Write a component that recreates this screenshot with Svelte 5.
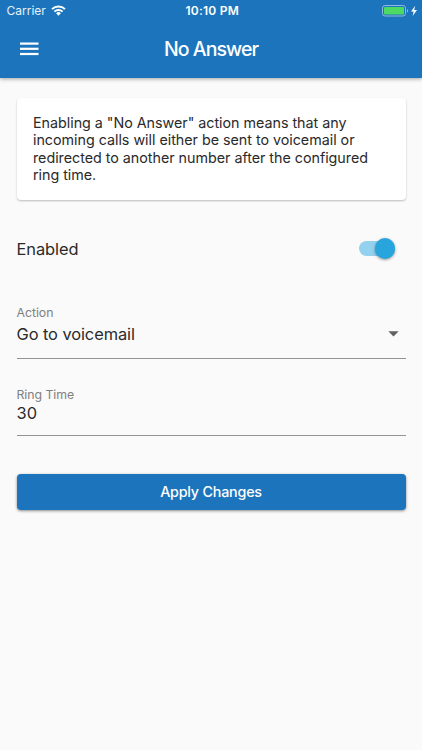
<script>
	let enabled = true;
	let action = "Go to voicemail";
	let ringTime = "30";
</script>

<div class="screen">
	<header>
		<div class="statusbar">
			<div class="carrier">
				<span>Carrier</span>
				<svg width="15" height="11" viewBox="0 0 15 11" fill="none" stroke="#fff">
					<path d="M1 4.1a9.3 9.3 0 0 1 13 0" stroke-width="2" />
					<path d="M3.4 6.7a5.8 5.8 0 0 1 8.2 0" stroke-width="1.9" />
					<path d="M5.1 8.3a3.4 3.4 0 0 1 4.8 0L7.5 10.7z" fill="#fff" stroke="none" />
				</svg>
			</div>
			<span class="time">10:10 PM</span>
			<div class="power">
				<svg width="36" height="12" viewBox="0 0 36 12">
					<rect x=".5" y=".5" width="23" height="10.5" rx="2.6" fill="none" stroke="#8fbbe0" />
					<rect x="2" y="2" width="20" height="7.5" rx="1.2" fill="#4cd964" />
					<path d="M25 4c1.5.5 1.5 3.1 0 3.6z" fill="#8fbbe0" />
					<path d="M33.2.8 29 6.5h2.6l-1 4.4 4.4-6h-2.8z" fill="#fff" />
				</svg>
			</div>
		</div>
		<div class="toolbar">
			<button class="menu" aria-label="Menu">
				<svg width="19" height="14" viewBox="0 0 19 14" fill="#fff">
					<rect y=".5" width="18.5" height="2.2" />
					<rect y="5.7" width="18.5" height="2.2" />
					<rect y="10.9" width="18.5" height="2.2" />
				</svg>
			</button>
			<h1>No Answer</h1>
		</div>
	</header>

	<main>
		<p class="card">
			Enabling a "No Answer" action means that any<br />
			incoming calls will either be sent to voicemail or<br />
			redirected to another number after the configured<br />
			ring time.
		</p>

		<div class="switch-row">
			<span>Enabled</span>
			<button
				class="switch"
				class:on={enabled}
				role="switch"
				aria-checked={enabled}
				aria-label="Enabled"
				on:click={() => (enabled = !enabled)}
			>
				<span class="thumb"></span>
			</button>
		</div>

		<div class="field action">
			<span class="label">Action</span>
			<div class="value">
				<span>{action}</span>
				<svg width="11" height="6" viewBox="0 0 11 6"><path d="M.3.3h10.4L5.5 5.5z" fill="#616161" /></svg>
			</div>
		</div>

		<div class="field ring">
			<label class="label" for="ringtime">Ring Time</label>
			<input id="ringtime" type="text" bind:value={ringTime} />
		</div>

		<button class="apply">Apply Changes</button>
	</main>
</div>

<style>
	:global(body) {
		margin: 0;
		background: #fafafa;
	}

	.screen {
		min-height: 750px;
		background: #fafafa;
		color: #2a2a2a;
		font-family: Inter, "Liberation Sans", sans-serif;
	}

	button {
		border: 0;
		padding: 0;
		background: none;
		font-family: inherit;
	}

	svg {
		display: block;
	}

	header {
		height: 77.5px;
		background: #1c75bc;
		color: #fff;
		box-shadow: 0 1px 4px rgba(0, 0, 0, 0.35);
	}

	.statusbar {
		display: grid;
		grid-template-columns: 1fr auto 1fr;
		align-items: center;
		height: 21.5px;
		padding: 0 4px 0 6.5px;
		font-size: 12px;
	}

	.carrier {
		display: flex;
		align-items: center;
		gap: 5.5px;
		color: #e6f1fa;
	}

	.time {
		font-weight: 600;
		letter-spacing: 0.25px;
	}

	.power {
		justify-self: end;
	}

	.toolbar {
		display: grid;
		grid-template-columns: 60px 1fr 60px;
		align-items: center;
		height: 54.5px;
	}

	.menu {
		padding-left: 19.5px;
	}

	h1 {
		margin: 0;
		text-align: center;
		font-size: 19.5px;
		font-weight: 500;
		letter-spacing: -0.95px;
	}

	main {
		display: flex;
		flex-direction: column;
		padding: 20.5px 16.5px 0;
	}

	.card {
		box-sizing: border-box;
		height: 102px;
		margin: 0;
		padding: 16px 16.5px;
		border-radius: 4px;
		background: #fff;
		box-shadow: 0 1px 2px rgba(0, 0, 0, 0.25);
		font-size: 14.3px;
		line-height: 17.4px;
		letter-spacing: -0.02px;
		white-space: nowrap;
	}

	.switch-row {
		display: flex;
		align-items: center;
		justify-content: space-between;
		height: 24px;
		margin-top: 36.5px;
		padding-right: 10.5px;
		font-size: 16.4px;
		letter-spacing: -0.07px;
	}

	.switch {
		display: flex;
		align-items: center;
		width: 36.5px;
		height: 14.5px;
		border-radius: 8px;
		background: #b5b5b5;
	}

	.switch.on {
		justify-content: flex-end;
		background: #93d2ef;
	}

	.thumb {
		width: 20.5px;
		height: 20.5px;
		border-radius: 50%;
		background: #29a5de;
		box-shadow: 0 1px 3px rgba(0, 0, 0, 0.4);
	}

	.field {
		display: flex;
		flex-direction: column;
		box-sizing: border-box;
		border-bottom: 1px solid #939393;
	}

	.action {
		height: 54px;
		margin-top: 44.5px;
	}

	.ring {
		height: 49px;
		margin-top: 27.5px;
	}

	.label {
		color: #808080;
		font-size: 12.3px;
		line-height: 16px;
		letter-spacing: -0.05px;
	}

	.value {
		display: flex;
		align-items: center;
		justify-content: space-between;
		height: 26px;
		padding-right: 7px;
		font-size: 16.4px;
		letter-spacing: -0.07px;
	}

	input {
		width: 100%;
		height: 21px;
		padding: 0;
		border: 0;
		outline: 0;
		background: none;
		color: inherit;
		font-family: inherit;
		font-size: 16.4px;
		letter-spacing: 0.2px;
	}

	.apply {
		height: 36.5px;
		margin-top: 38px;
		border-radius: 4px;
		background: #1c75bc;
		color: #fff;
		box-shadow: 0 1px 3px rgba(0, 0, 0, 0.45);
		font-size: 14.3px;
		font-weight: 500;
		letter-spacing: -0.2px;
	}
</style>
